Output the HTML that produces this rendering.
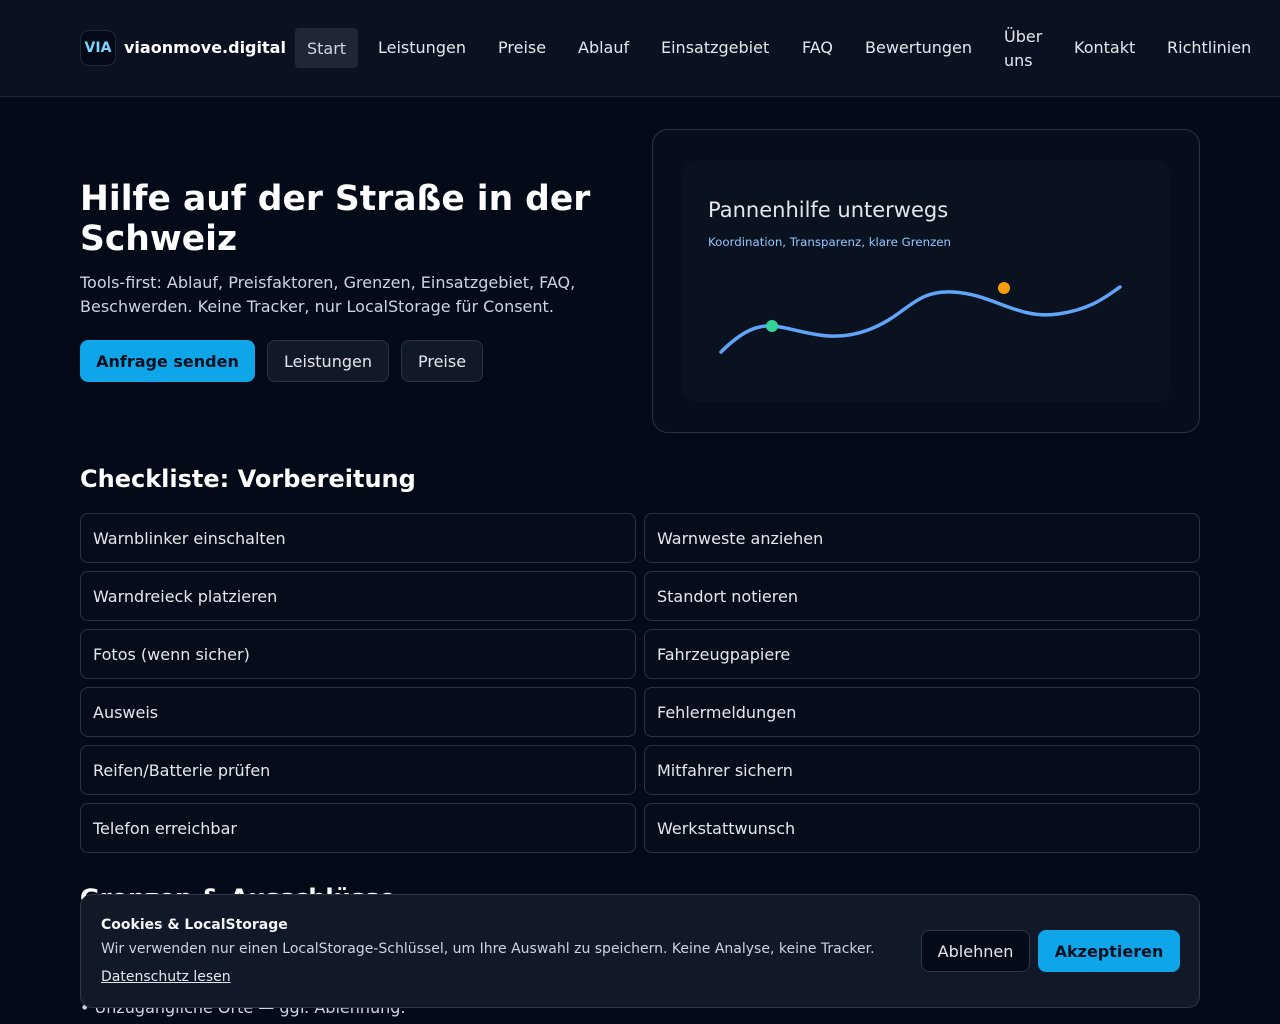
<!DOCTYPE html>
<html><head><meta charset="utf-8"><style>
*{box-sizing:border-box;margin:0;padding:0}
body{width:1280px;height:1024px;overflow:hidden;background:#050a18;color:#e5e7eb;font-family:"DejaVu Sans","Liberation Sans",sans-serif;position:relative}
header{height:97px;background:#0b1121;border-bottom:1px solid #1e2535;position:relative}
.logo{position:absolute;left:80px;top:30px;width:36px;height:36px;border-radius:9px;background:#050a18;border:1px solid #1e293b;color:#7dd3fc;font-weight:bold;font-size:14px;display:flex;align-items:center;justify-content:center}
.brand{position:absolute;left:124px;top:38px;font-weight:bold;font-size:16px;color:#fff}
nav a{position:absolute;font-size:16px;color:#e5e7eb;text-decoration:none}
.start{left:295px;top:28px;width:63px;height:40px;background:#1f2737;border-radius:4px;display:flex;align-items:center;justify-content:center;color:#d1d5db}
h1{position:absolute;left:80px;top:179px;font-size:34.5px;line-height:40px;color:#fff;font-weight:bold}
.lead{position:absolute;left:80px;top:271px;font-size:16px;line-height:24px;color:#cbd5e1}
.btn{position:absolute;top:340px;height:42px;border-radius:8px;font-size:16px;display:flex;align-items:center;justify-content:center}
.card{position:absolute;left:652px;top:129px;width:548px;height:304px;border:1px solid #2a3344;border-radius:16px;background:#070d1c}
.inner{position:absolute;left:30px;top:30px;width:488px;height:242px;border-radius:14px;background:#0a1220}
h2{position:absolute;left:80px;top:465px;font-size:24px;color:#fff;font-weight:bold}
.item{position:absolute;width:556px;height:50px;border:1px solid #2a3344;border-radius:8px;background:#070c1a;font-size:16px;padding-left:12px;display:flex;align-items:center;color:#e5e7eb}
.ck{position:absolute;left:80px;top:894px;width:1120px;height:114px;background:#111827;border:1px solid #2e3748;border-radius:12px}
</style></head><body>
<header>
<div class="logo">VIA</div><div class="brand">viaonmove.digital</div>
<nav>
<a class="start">Start</a>
<a style="left:378px;top:38px">Leistungen</a>
<a style="left:498px;top:38px">Preise</a>
<a style="left:578px;top:38px">Ablauf</a>
<a style="left:661px;top:38px">Einsatzgebiet</a>
<a style="left:802px;top:38px">FAQ</a>
<a style="left:865px;top:38px">Bewertungen</a>
<a style="left:1004px;top:25px;line-height:24px">Über<br>uns</a>
<a style="left:1074px;top:38px">Kontakt</a>
<a style="left:1167px;top:38px">Richtlinien</a>
</nav>
</header>
<h1>Hilfe auf der Straße in der<br>Schweiz</h1>
<div class="lead">Tools-first: Ablauf, Preisfaktoren, Grenzen, Einsatzgebiet, FAQ,<br>Beschwerden. Keine Tracker, nur LocalStorage für Consent.</div>
<div class="btn" style="left:80px;width:175px;background:#0ea5e9;color:#0b1120;font-weight:bold">Anfrage senden</div>
<div class="btn" style="left:267px;width:122px;background:#111827;border:1px solid #2a3344">Leistungen</div>
<div class="btn" style="left:401px;width:82px;background:#111827;border:1px solid #2a3344">Preise</div>
<div class="card"><div class="inner"></div>
<svg width="548" height="304" style="position:absolute;left:0;top:0">
<text x="55" y="87" fill="#e5e7eb" font-size="21" font-family="DejaVu Sans">Pannenhilfe unterwegs</text>
<text x="55" y="116" fill="#93c5fd" font-size="11.8" font-family="DejaVu Sans">Koordination, Transparenz, klare Grenzen</text>
<path d="M68 222 C90 200 105 195 120 196 C145 198 175 215 215 200 C255 185 260 160 300 162 C340 164 365 190 405 184 C440 179 455 165 467 157" stroke="#60a5fa" stroke-width="3.5" fill="none" stroke-linecap="round"/>
<circle cx="119" cy="196" r="6" fill="#34d399"/>
<circle cx="351" cy="158" r="6" fill="#f59e0b"/>
</svg></div>
<h2>Checkliste: Vorbereitung</h2>
<div class="item" style="left:80px;top:513px">Warnblinker einschalten</div>
<div class="item" style="left:644px;top:513px">Warnweste anziehen</div>
<div class="item" style="left:80px;top:571px">Warndreieck platzieren</div>
<div class="item" style="left:644px;top:571px">Standort notieren</div>
<div class="item" style="left:80px;top:629px">Fotos (wenn sicher)</div>
<div class="item" style="left:644px;top:629px">Fahrzeugpapiere</div>
<div class="item" style="left:80px;top:687px">Ausweis</div>
<div class="item" style="left:644px;top:687px">Fehlermeldungen</div>
<div class="item" style="left:80px;top:745px">Reifen/Batterie prüfen</div>
<div class="item" style="left:644px;top:745px">Mitfahrer sichern</div>
<div class="item" style="left:80px;top:803px">Telefon erreichbar</div>
<div class="item" style="left:644px;top:803px">Werkstattwunsch</div>
<div style="position:absolute;left:80px;top:884px;font-size:24px;font-weight:bold;color:#fff">Grenzen &amp; Ausschlüsse</div>
<div style="position:absolute;left:80px;top:998px;font-size:16px;color:#cbd5e1">• Unzugängliche Orte — ggf. Ablehnung.</div>
<div class="ck">
<div style="position:absolute;left:20px;top:22px;font-size:14px;font-weight:bold;color:#f3f4f6">Cookies &amp; LocalStorage</div>
<div style="position:absolute;left:20px;top:46px;font-size:14px;color:#cbd5e1">Wir verwenden nur einen LocalStorage-Schlüssel, um Ihre Auswahl zu speichern. Keine Analyse, keine Tracker.</div>
<div style="position:absolute;left:20px;top:74px;font-size:14px;color:#e5e7eb;text-decoration:underline">Datenschutz lesen</div>
<div class="btn" style="left:840px;top:35px;width:109px;background:#050a18;border:1px solid #2e3748">Ablehnen</div>
<div class="btn" style="left:957px;top:35px;width:142px;background:#0ea5e9;color:#0b1120;font-weight:bold">Akzeptieren</div>
</div>
</body></html>
